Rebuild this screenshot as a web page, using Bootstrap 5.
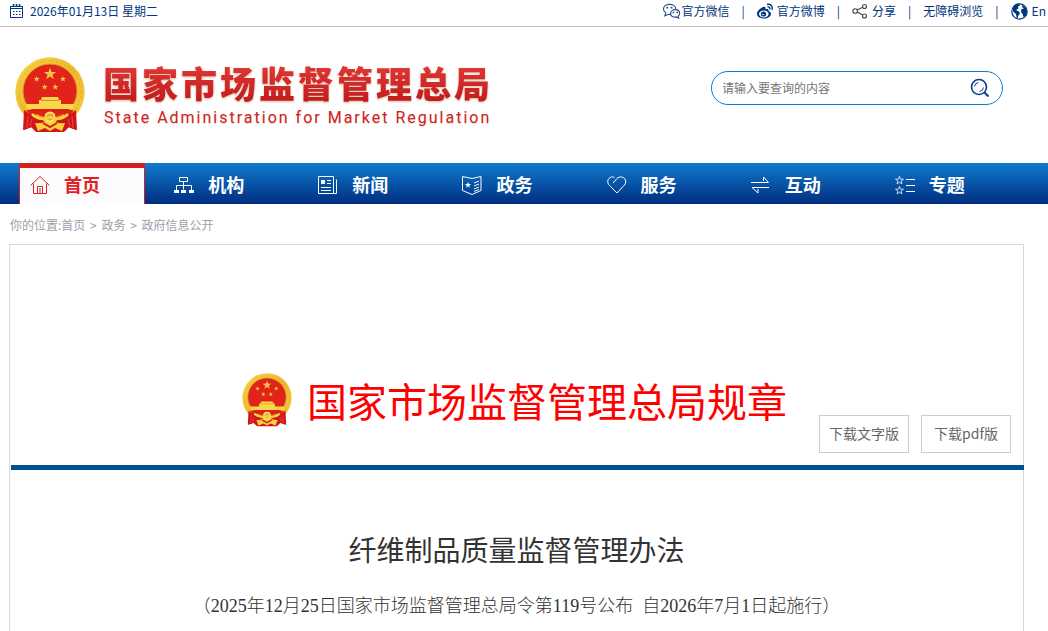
<!DOCTYPE html>
<html lang="zh-CN">
<head>
<meta charset="utf-8">
<meta name="viewport" content="width=device-width, initial-scale=1">
<title>国家市场监督管理总局规章</title>
<link href="https://cdn.jsdelivr.net/npm/bootstrap@5.3.0/dist/css/bootstrap.min.css" rel="stylesheet">
<style>
  body { font-family: "Noto Sans CJK SC", sans-serif; font-size: 12px; color: #333; background: #fff; }
  a { color: inherit; text-decoration: none; }
  svg { flex: none; }
  .topbar { min-height: 27px; line-height: 22px; padding: 0 2px 4px 9px; border-bottom: 1px solid #bfbfbf; color: #003580; }
  .top-date { gap: 6px; }
  .top-links { gap: 12px; }
  .masthead { padding: 30px 45px 30px 15px; }
  .brand-text { padding: 5px 0 0 18px; }
  .brand-cn { font-size: 36px; line-height: 40px; font-weight: 900; letter-spacing: 3px; color: transparent;
    background: linear-gradient(#e03a38, #c41a1c); -webkit-background-clip: text; background-clip: text; filter: drop-shadow(0 1px 1px #d8b49a); }
  .brand-en { font-family: Roboto, "Liberation Sans", sans-serif; font-size: 16px; line-height: 20px; letter-spacing: 2px; padding: 6px 0 0 1px; color: #d02224; text-shadow: 0 1px 1px #ecd8c8; }
  .search-box { width: 292px; height: 34px; margin-top: 14px; border: 1px solid #0f7ccf; border-radius: 17px; padding: 0 12px 0 10px; }
  .search-box input { border: 0; outline: 0; font-size: 12px; min-width: 0; padding: 0; background: none; }
  .search-box input::placeholder { color: #757575; }
  .mainnav { background: linear-gradient(#0f7ccf, #002d80); padding: 0 20px 0 19px; }
  .mainnav a { height: 41px; gap: 14px; padding: 2px 0 0 11px; font-size: 18px; font-weight: 700; color: #fff; }
  .mainnav li { flex: 1 1 0; }
  .mainnav a.current { margin-right: 18px; background: #fbfbfb; color: #e02024; border: 1px solid #d02020; border-width: 5px 1px 0; padding: 0 0 3px 10px; }
  .crumbs { padding: 11px 10px 10px; line-height: 19px; color: #9aa0ac; }
  .crumbs span { margin: 0 2px; }
  .doc { margin: 0 24px 0 9px; border: 1px solid #d3dae6; border-bottom: 0; }
  .doc-head { display: grid; grid-template-columns: 1fr auto 1fr; align-items: end; padding: 125px 13px 12px 7px; margin: 0 -1px 0 1px; border-bottom: 5px solid #00508f; }
  .doc-name { grid-column: 2; gap: 15px; padding-bottom: 23px; color: #f00; }
  .doc-name h1 { font-size: 40px; line-height: 60px; font-weight: 400; }
  .btn-dl { width: 90px; height: 38px; padding: 0 0 2px; border: 1px solid #ccc; border-radius: 0; font-size: 14px; color: #666; }
  .doc-title { font-size: 28px; line-height: 40px; font-weight: 400; padding-top: 59px; }
  .doc-note { font-family: "Liberation Serif", "Noto Sans CJK SC", serif; font-size: 18px; line-height: 28px; font-weight: 300; padding: 23px 0 40px; }
</style>
</head>
<body class="d-flex flex-column min-vh-100">
<svg width="0" height="0" class="position-absolute" aria-hidden="true">
  <defs>
    <linearGradient id="gold" x1="0" y1="0" x2="1" y2="1"><stop offset="0" stop-color="#f8d84a"/><stop offset=".5" stop-color="#eeb92c"/><stop offset="1" stop-color="#f6cf3c"/></linearGradient>
    <path id="star" d="M0-1 .235-.324.951-.309.38.124.588.809 0 .4-.588.809-.38.124-.951-.309-.235-.324Z"/>
  </defs>
  <symbol id="emblem" viewBox="0 0 70 76">
    <path d="M10 52 9 73l8-3 4 5h28l4-5 8 3-1-21Z" fill="#cf171b"/>
    <circle cx="35" cy="35" r="34.700" fill="url(#gold)"/>
    <circle cx="35" cy="35" r="31" fill="none" stroke="#dda126" stroke-width="1.500" stroke-dasharray="2 2" opacity=".5"/>
    <circle cx="35" cy="34" r="27" fill="#e22319" stroke="#d9982a"/>
    <g fill="#f3c443"><use href="#star" transform="translate(35 17) scale(6.500)"/><use href="#star" transform="translate(21.700 22) scale(3.300)"/><use href="#star" transform="translate(48 22) scale(3.300)"/><use href="#star" transform="translate(29.700 30) scale(3.300)"/><use href="#star" transform="translate(40.300 30) scale(3.300)"/></g>
    <path d="M27 40h16l1 3h2v4h13l-1 5H12l-1-5h13v-4h2Z" fill="#fbd84b"/>
    <path d="M26 43.500h18" stroke="#d9901f"/>
    <path d="M11 53h48l-5 6-10-3-9-2-9 2-10 3Z" fill="#dc2118"/>
    <path d="M9 53c7 4 10 10 18 9l3 4-6 1-4 7-4-4-8 3Z" fill="#cf171b"/>
    <path d="M61 53c-7 4-10 10-18 9l-3 4 6 1 4 7 4-4 8 3Z" fill="#cf171b"/>
    <path d="m13 59-1 12M17 62l-2 7M57 59l1 12M53 62l2 7" stroke="#ef4a38"/>
    <path d="M20 66q9 1 15-4 6 5 15 4l-3 8-7-3-5 3-5-3-7 3Z" fill="#f8d13b"/>
    <circle cx="35" cy="60" r="4.500" fill="#e5a52b" stroke="#fbe071" stroke-width="2"/>
    <path d="M17 57c6 6 14 6 18 3 4 3 12 3 18-3" fill="none" stroke="#f8d13b" stroke-width="2.500"/>
    <path d="m28 66 7 4 7-4" fill="none" stroke="#d4201a" stroke-width="2"/>
  </symbol>
</svg>

<div class="topbar d-flex justify-content-between">
  <div class="top-date d-flex align-items-center">
    <svg width="15" height="16" viewBox="0 0 15 16" fill="none" stroke="#003580"><path d="M1.500 3v11.500h12V3M1 3.500h13M1 5.500h13"/><path d="M4.500 1v3M7.500 1v3M10.500 1v3" stroke-width="1.500"/><path d="M4 8.500h8M4 11.500h8" stroke-dasharray="1.500 1.500"/></svg>
    <span>2026年01月13日 星期二</span>
  </div>
  <div class="top-links d-flex">
    <a href="#" class="d-flex align-items-center">
      <svg width="20" height="18" viewBox="0 0 21 18" fill="#fff" stroke="#2b4f88" stroke-width="1.200"><path d="m4 11-1 3 4-1.500c5 .5 7.500-2 7.500-5.500 0-3-3-5-6.500-5S1.500 4 1.500 7c0 1.500.8 3 2.500 4Z"/><path d="M18.500 11.500c0-2.400-2-4-4.500-4s-5 1.600-5 4.200c0 2.800 3 4.300 6 3.500l2.500 1.300-.5-2.100q1.500-1.100 1.500-2.900Z"/><g fill="#2b4f88" stroke="none"><circle cx="5.500" cy="5.500" r="1"/><circle cx="10" cy="5.500" r="1"/><circle cx="12" cy="10.500" r=".9"/><circle cx="16" cy="10.500" r=".9"/></g></svg>官方微信</a>
    <span>|</span>
    <a href="#" class="d-flex align-items-center">
      <svg class="me-1" width="16" height="16" viewBox="0 0 16 16" fill="#003580"><path d="M6 4C2.500 5.500 0 8.500 0 11c0 3 3.500 4.500 7 4.500s7-2 7-4.500c0-1.500-1-2.500-2.500-2.800C12 6.500 11 5.500 8.500 6.500 9 4.500 8 3.500 6 4Z"/><ellipse cx="6.800" cy="11" rx="4.800" ry="3.500" fill="#fff"/><circle cx="6.500" cy="11" r="2.600"/><circle cx="6" cy="11.500" r=".8" fill="#fff"/><path d="M10 1.500c3.500-1 6 2 5 5.300M10.500 4c1.600-.4 2.800.8 2.300 2.400" fill="none" stroke="#003580" stroke-width="1.400"/></svg>官方微博</a>
    <span>|</span>
    <a href="#" class="d-flex align-items-center">
      <svg class="me-1" width="16" height="16" viewBox="0 0 16 16" fill="none" stroke="#444" stroke-width="1.100"><circle cx="3.200" cy="8" r="2.300"/><circle cx="12.500" cy="3.500" r="2"/><circle cx="12.500" cy="13" r="2"/><path d="m5.300 7 5.300-2.700M5.300 9l5.400 3"/></svg>分享</a>
    <span>|</span>
    <a href="#">无障碍浏览</a>
    <span>|</span>
    <a href="#" class="d-flex align-items-center">
      <svg class="me-1" width="17" height="17" viewBox="0 0 17 17"><circle cx="8.500" cy="8.500" r="7.700" fill="#fff" stroke="#003580" stroke-width="1.200"/><path d="M2 4q2-3 6-3.500l1 2-2 1 .5 2L5 7l3 1.500 1 2-2 2.500v2.500l-1.500-1L5 11 2 8.500ZM11 2l4 3 1 4-1.500 4-2 1-1-3-1.500-2 .5-3 2.500-.5L11 4Z" fill="#003580"/></svg>En</a>
  </div>
</div>

<header class="masthead d-flex flex-wrap justify-content-between align-items-start">
  <a href="#" class="d-flex">
    <svg width="70" height="76" role="img" aria-label="国徽"><use href="#emblem"/></svg>
    <span class="brand-text d-block">
      <span class="brand-cn d-block">国家市场监督管理总局</span>
      <span class="brand-en d-block">State Administration for Market Regulation</span>
    </span>
  </a>
  <form class="search-box d-flex align-items-center" role="search">
    <input class="flex-grow-1" type="text" aria-label="搜索" placeholder="请输入要查询的内容">
    <button type="submit" class="btn p-0 border-0 d-flex" aria-label="查询">
      <svg width="20" height="20" viewBox="0 0 20 20" fill="none" stroke="#0a3d86"><circle cx="9" cy="9" r="7.500" stroke-width="1.600"/><path d="m14.500 14.500 4 4" stroke-width="2"/><path d="M4.500 8.500q.5-3.500 4-4M13.500 9.500q-.5 3.500-4 4"/></svg>
    </button>
  </form>
</header>

<nav class="mainnav" aria-label="主导航">
  <ul class="list-unstyled d-flex mb-0">
    <li><a href="#" class="current d-flex align-items-center" aria-current="page"><svg width="20" height="20" viewBox="0 0 20 20" fill="none" stroke="currentColor"><path d="m.5 10.500 9.500-9 9.500 9M3.500 8.500v10h13v-10M7.500 18.500v-7h5v7M10 13v5"/></svg>首页</a></li>
    <li><a href="#" class="d-flex align-items-center"><svg width="20" height="20" viewBox="0 0 20 20" fill="none" stroke="currentColor"><path d="M5.500 2.500h8v4h-8ZM9.500 6.500v8M2.500 15v-4.500h15V15"/><path d="M0 16.500h5M7 16.500h5M15 16.500h5" stroke-width="3"/></svg>机构</a></li>
    <li><a href="#" class="d-flex align-items-center"><svg width="20" height="20" viewBox="0 0 20 20" fill="none" stroke="currentColor"><path d="M.5 18.500v-17h15v17ZM15.500 18.500h3v-14M9 5.500h4M9 8.500h4M3 12.500h10M3 15.500h10"/><path d="M3 5h4v4H3Z" fill="currentColor" stroke="none"/></svg>新闻</a></li>
    <li><a href="#" class="d-flex align-items-center"><svg width="20" height="20" viewBox="0 0 20 20" fill="none" stroke="currentColor"><path d="m.5 1.500 9.500 2 9-2v14l-9 4-9.500-4ZM12 8l5-2M12 11l5-2M12 14l5-2M12 16.500l5-2"/><use href="#star" fill="currentColor" stroke="none" transform="translate(6 10) scale(3.300)"/></svg>政务</a></li>
    <li><a href="#" class="d-flex align-items-center"><svg width="20" height="20" viewBox="0 0 20 20" fill="none" stroke="currentColor"><path d="M6 8 10 3.500C12.500 1 17 1.500 18.500 5c1 3-1 5-2.500 6.500L10 18l-6-6C2 10 0 8 1 5c1-2.500 4-4 6.500-2.500"/></svg>服务</a></li>
    <li><a href="#" class="d-flex align-items-center"><svg width="20" height="20" viewBox="0 0 20 20" fill="none" stroke="currentColor"><path d="M0 7.500h17.500l-5-5.500v4M18 12.500H1l6 5.500v-4"/></svg>互动</a></li>
    <li><a href="#" class="d-flex align-items-center"><svg width="20" height="20" viewBox="0 0 20 20" fill="none" stroke="currentColor"><use href="#star" transform="translate(4.500 5.500) scale(4.200)" stroke-width=".18"/><use href="#star" transform="translate(4.500 15.500) scale(4.200)" stroke-width=".18"/><path d="M11 4.500h9M11 10.500h9M11 16.500h9"/></svg>专题</a></li>
  </ul>
</nav>

<div class="crumbs">你的位置:<a href="#">首页</a> <span>&gt;</span> <a href="#">政务</a> <span>&gt;</span> <a href="#">政府信息公开</a></div>

<main class="doc flex-grow-1">
  <div class="doc-head">
    <div class="doc-name d-flex align-items-center">
      <svg width="50" height="54" aria-hidden="true"><use href="#emblem"/></svg>
      <h1 class="mb-0">国家市场监督管理总局规章</h1>
    </div>
    <div class="d-flex justify-content-end">
      <button type="button" class="btn btn-dl me-2">下载文字版</button>
      <button type="button" class="btn btn-dl ms-1">下载pdf版</button>
    </div>
  </div>
  <h2 class="doc-title text-center mb-0">纤维制品质量监督管理办法</h2>
  <p class="doc-note text-center mb-0">（2025年12月25日国家市场监督管理总局令第119号公布&nbsp; 自2026年7月1日起施行）</p>
</main>
<script src="https://cdn.jsdelivr.net/npm/bootstrap@5.3.0/dist/js/bootstrap.bundle.min.js"></script>
</body>
</html>
